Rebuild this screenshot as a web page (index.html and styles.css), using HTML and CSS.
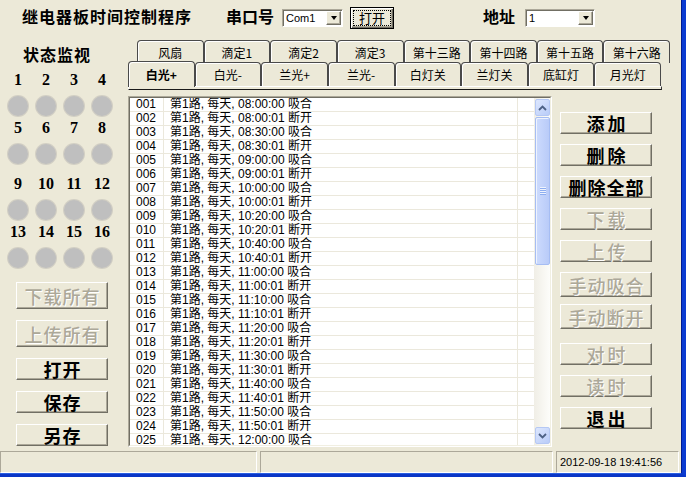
FILE: index.html
```html
<!DOCTYPE html>
<html lang="zh">
<head>
<meta charset="utf-8">
<title>继电器板时间控制程序</title>
<link rel="stylesheet" href="styles.css">
</head>
<body>
<div class="window">
  <div class="frame">
    <header class="topbar">
      <h1 class="title">继电器板时间控制程序</h1>
      <span class="label label-port">串口号</span>
      <div class="combo combo-port"><span class="combo-text">Com1</span><span class="combo-btn"><i class="arrow"></i></span></div>
      <button class="btn-port"><span class="focus">打开</span></button>
      <span class="label label-addr">地址</span>
      <div class="combo combo-addr"><span class="combo-text">1</span><span class="combo-btn"><i class="arrow"></i></span></div>
    </header>

    <main class="main">
      <aside class="left">
        <div class="heading">状态监视</div>
        <div class="led-group g1">
          <span class="num">1</span><span class="num">2</span><span class="num">3</span><span class="num">4</span>
          <span class="dot"></span><span class="dot"></span><span class="dot"></span><span class="dot"></span>
        </div>
        <div class="led-group g2">
          <span class="num">5</span><span class="num">6</span><span class="num">7</span><span class="num">8</span>
          <span class="dot"></span><span class="dot"></span><span class="dot"></span><span class="dot"></span>
        </div>
        <div class="led-group g3">
          <span class="num">9</span><span class="num">10</span><span class="num">11</span><span class="num">12</span>
          <span class="dot"></span><span class="dot"></span><span class="dot"></span><span class="dot"></span>
        </div>
        <div class="led-group g4">
          <span class="num">13</span><span class="num">14</span><span class="num">15</span><span class="num">16</span>
          <span class="dot"></span><span class="dot"></span><span class="dot"></span><span class="dot"></span>
        </div>
        <div class="left-btns">
          <button class="btn btn-tall" disabled>下载所有</button>
          <button class="btn btn-tall" disabled>上传所有</button>
          <button class="btn">打开</button>
          <button class="btn">保存</button>
          <button class="btn">另存</button>
        </div>
      </aside>

      <section class="center">
        <div class="tabs">
          <div class="tabrow tabrow-back">
            <div class="tab">风扇</div>
            <div class="tab">滴定1</div>
            <div class="tab">滴定2</div>
            <div class="tab">滴定3</div>
            <div class="tab">第十三路</div>
            <div class="tab">第十四路</div>
            <div class="tab">第十五路</div>
            <div class="tab">第十六路</div>
          </div>
          <div class="tabrow tabrow-front">
            <div class="tab active">白光+</div>
            <div class="tab">白光-</div>
            <div class="tab">兰光+</div>
            <div class="tab">兰光-</div>
            <div class="tab">白灯关</div>
            <div class="tab">兰灯关</div>
            <div class="tab">底缸灯</div>
            <div class="tab">月光灯</div>
          </div>
          <div class="tabpanel"></div>
        </div>

        <div class="work">
          <div class="listbox">
            <div class="listinner">
              <div class="rows">
                <div class="row"><span class="c1">001</span><span class="c2">第1路, 每天, 08:00:00 吸合</span><span class="c3"></span></div>
                <div class="row"><span class="c1">002</span><span class="c2">第1路, 每天, 08:00:01 断开</span><span class="c3"></span></div>
                <div class="row"><span class="c1">003</span><span class="c2">第1路, 每天, 08:30:00 吸合</span><span class="c3"></span></div>
                <div class="row"><span class="c1">004</span><span class="c2">第1路, 每天, 08:30:01 断开</span><span class="c3"></span></div>
                <div class="row"><span class="c1">005</span><span class="c2">第1路, 每天, 09:00:00 吸合</span><span class="c3"></span></div>
                <div class="row"><span class="c1">006</span><span class="c2">第1路, 每天, 09:00:01 断开</span><span class="c3"></span></div>
                <div class="row"><span class="c1">007</span><span class="c2">第1路, 每天, 10:00:00 吸合</span><span class="c3"></span></div>
                <div class="row"><span class="c1">008</span><span class="c2">第1路, 每天, 10:00:01 断开</span><span class="c3"></span></div>
                <div class="row"><span class="c1">009</span><span class="c2">第1路, 每天, 10:20:00 吸合</span><span class="c3"></span></div>
                <div class="row"><span class="c1">010</span><span class="c2">第1路, 每天, 10:20:01 断开</span><span class="c3"></span></div>
                <div class="row"><span class="c1">011</span><span class="c2">第1路, 每天, 10:40:00 吸合</span><span class="c3"></span></div>
                <div class="row"><span class="c1">012</span><span class="c2">第1路, 每天, 10:40:01 断开</span><span class="c3"></span></div>
                <div class="row"><span class="c1">013</span><span class="c2">第1路, 每天, 11:00:00 吸合</span><span class="c3"></span></div>
                <div class="row"><span class="c1">014</span><span class="c2">第1路, 每天, 11:00:01 断开</span><span class="c3"></span></div>
                <div class="row"><span class="c1">015</span><span class="c2">第1路, 每天, 11:10:00 吸合</span><span class="c3"></span></div>
                <div class="row"><span class="c1">016</span><span class="c2">第1路, 每天, 11:10:01 断开</span><span class="c3"></span></div>
                <div class="row"><span class="c1">017</span><span class="c2">第1路, 每天, 11:20:00 吸合</span><span class="c3"></span></div>
                <div class="row"><span class="c1">018</span><span class="c2">第1路, 每天, 11:20:01 断开</span><span class="c3"></span></div>
                <div class="row"><span class="c1">019</span><span class="c2">第1路, 每天, 11:30:00 吸合</span><span class="c3"></span></div>
                <div class="row"><span class="c1">020</span><span class="c2">第1路, 每天, 11:30:01 断开</span><span class="c3"></span></div>
                <div class="row"><span class="c1">021</span><span class="c2">第1路, 每天, 11:40:00 吸合</span><span class="c3"></span></div>
                <div class="row"><span class="c1">022</span><span class="c2">第1路, 每天, 11:40:01 断开</span><span class="c3"></span></div>
                <div class="row"><span class="c1">023</span><span class="c2">第1路, 每天, 11:50:00 吸合</span><span class="c3"></span></div>
                <div class="row"><span class="c1">024</span><span class="c2">第1路, 每天, 11:50:01 断开</span><span class="c3"></span></div>
                <div class="row"><span class="c1">025</span><span class="c2">第1路, 每天, 12:00:00 吸合</span><span class="c3"></span></div>
              </div>
              <div class="scroll">
                <div class="sb-btn"><svg width="9" height="6" viewBox="0 0 9 6"><path d="M1 5 L4.5 1.5 L8 5" fill="none" stroke="#4d6185" stroke-width="1.8"/></svg></div>
                <div class="sb-thumb"><span class="sb-grip"></span></div>
                <div class="sb-fill"></div>
                <div class="sb-btn"><svg width="9" height="6" viewBox="0 0 9 6"><path d="M1 1 L4.5 4.5 L8 1" fill="none" stroke="#4d6185" stroke-width="1.8"/></svg></div>
              </div>
            </div>
          </div>

          <div class="actions">
            <button class="btn wide">添加</button>
            <button class="btn wide">删除</button>
            <button class="btn">删除全部</button>
            <button class="btn wide" disabled>下载</button>
            <button class="btn wide" disabled>上传</button>
            <button class="btn btn-25" disabled>手动吸合</button>
            <button class="btn btn-25 tight" disabled>手动断开</button>
            <button class="btn wide loose" disabled>对时</button>
            <button class="btn wide" disabled>读时</button>
            <button class="btn wide">退出</button>
          </div>
        </div>
      </section>
    </main>

    <footer class="status">
      <div class="panel p1"></div>
      <div class="panel p2"></div>
      <div class="panel p3">2012-09-18 19:41:56</div>
    </footer>
  </div>
</div>
</body>
</html>
```

FILE: styles.css
```css
html, body {
  margin: 0;
  padding: 0;
}

body {
  width: 686px;
  height: 477px;
  overflow: hidden;
  background: #ece9d8;
  font-family: "Noto Sans CJK SC", "Liberation Sans", sans-serif;
  color: #000;
}

.window {
  box-sizing: border-box;
  width: 686px;
  height: 477px;
  border-right: 5px solid #0b3bd1;
  border-bottom: 4px solid #0a36c6;
}

.frame {
  height: 473px;
  display: flex;
  flex-direction: column;
  background: #ece9d8;
  box-shadow: 1px 0 0 #001a8f, 0 1px 0 #2a5fe2;
}

/* ---------- top bar ---------- */
.topbar {
  height: 36px;
  flex: none;
  display: flex;
  align-items: flex-start;
}

.title {
  margin: 6px 0 0 22px;
  font-size: 16px;
  line-height: 20px;
  font-weight: 700;
  letter-spacing: 1px;
}

.label {
  margin-top: 6px;
  font-size: 16px;
  line-height: 20px;
  font-weight: 700;
}

.label-port { margin-left: 34px; }
.label-addr { margin-left: 89px; }

.combo {
  box-sizing: border-box;
  height: 18px;
  margin-top: 9px;
  display: flex;
  background: #fff;
  border: 1px solid;
  border-color: #aca899 #fff #fff #aca899;
  box-shadow: inset 1px 1px 0 #716f64;
}

.combo-port { margin-left: 8px; width: 61px; }
.combo-addr { margin-left: 10px; width: 70px; }

.combo-text {
  padding-left: 3px;
  font-family: "Liberation Sans", sans-serif;
  font-size: 11px;
  line-height: 16px;
}

.combo-btn {
  box-sizing: border-box;
  width: 15px;
  height: 14px;
  margin: 1px 1px 0 auto;
  background: #ece9d8;
  border: 1px solid;
  border-color: #fff #716f64 #716f64 #fff;
  box-shadow: inset -1px -1px 0 #aca899;
  display: flex;
  align-items: center;
  justify-content: center;
}

.arrow {
  width: 0;
  height: 0;
  border-left: 3.5px solid transparent;
  border-right: 3.5px solid transparent;
  border-top: 4px solid #000;
}

.btn-port {
  box-sizing: border-box;
  margin: 7px 0 0 7px;
  width: 44px;
  height: 22px;
  padding: 2px;
  background: #ece9d8;
  border: 1px solid #000;
  box-shadow: inset 1px 1px 0 #fff, inset -1px -1px 0 #716f64, inset -2px -2px 0 #aca899;
  font-family: "Noto Sans CJK SC", sans-serif;
  font-size: 13px;
  color: #000;
  display: flex;
}

.focus {
  flex: 1;
  border: 1px dotted #000;
  line-height: 14px;
  text-align: center;
}

/* ---------- main ---------- */
.main {
  height: 413px;
  flex: none;
  display: grid;
  grid-template-columns: 128px 1fr;
}

.left {
  display: flex;
  flex-direction: column;
}

.heading {
  margin: 8px 0 0 23px;
  font-size: 16px;
  line-height: 20px;
  font-weight: 700;
  letter-spacing: 1px;
}

.led-group {
  display: grid;
  grid-template-columns: repeat(4, 28px);
  padding-left: 4px;
}

.g1 { margin-top: 8px; }
.g2 { margin-top: 4px; }
.g3 { margin-top: 12px; }
.g4 { margin-top: 4px; }

.num {
  font-family: "Liberation Serif", serif;
  font-weight: 700;
  font-size: 16px;
  line-height: 16px;
  text-align: center;
}

.dot {
  justify-self: center;
  width: 20px;
  height: 20px;
  margin-top: 8px;
  border-radius: 50%;
  background: #bfbfbf;
  box-shadow: 0 0 0 1px #d2cfc4;
}

.left-btns {
  margin: 14px 0 0 16px;
  width: 92px;
  display: flex;
  flex-direction: column;
  gap: 11px;
}

/* ---------- buttons ---------- */
.btn {
  box-sizing: border-box;
  width: 92px;
  height: 22px;
  padding: 0 0 0 1px;
  background: #ece9d8;
  border: 1px solid;
  border-color: #fff #716f64 #716f64 #fff;
  box-shadow: inset -1px -1px 0 #aca899;
  font-family: "Noto Sans CJK SC", sans-serif;
  font-weight: 700;
  font-size: 18px;
  line-height: 18px;
  letter-spacing: 1px;
  color: #000;
  display: flex;
  align-items: center;
  justify-content: center;
}

.btn.wide {
  letter-spacing: 3px;
  padding-left: 3px;
}

.btn:disabled {
  color: #aca899;
  font-weight: 500;
  text-shadow: 1px 1px 0 #fff;
}

.btn-tall { height: 27px; }
.btn-25 { height: 25px; }

/* ---------- tabs ---------- */
.center {
  display: flex;
  flex-direction: column;
}

.tabs {
  margin-top: 4px;
  width: 542px;
}

.tabrow {
  display: flex;
  align-items: flex-start;
}

.tabrow-back {
  margin-left: 9px;
  height: 23px;
}

.tabrow-front {
  margin-top: -1px;
  height: 24px;
}

.tab {
  box-sizing: border-box;
  flex: none;
  width: 66.625px;
  height: 100%;
  border: 1px solid #4a4a4a;
  border-bottom: 0;
  border-radius: 4px 4px 0 0;
  background: #ece9d8;
  box-shadow: inset 1px 1px 0 #fff;
  font-size: 12px;
  display: flex;
  align-items: center;
  justify-content: center;
}

.tabrow-front .tab { height: 24px; }

.tabrow-front .tab.active {
  height: 26px;
  margin-top: -1px;
  font-weight: 700;
  position: relative;
  z-index: 1;
}

.tabpanel {
  box-sizing: border-box;
  width: 534px;
  height: 4px;
  border: 1px solid;
  border-color: #fff #3a3a3a #1a1a1a #fff;
}

/* ---------- list ---------- */
.work {
  display: flex;
  align-items: flex-start;
  margin-top: 6px;
}

.listbox {
  box-sizing: border-box;
  width: 424px;
  height: 351px;
  border: 1px solid;
  border-color: #aca899 #fff #fff #aca899;
}

.listinner {
  box-sizing: border-box;
  height: 100%;
  border: 1px solid;
  border-color: #716f64 #f1efe2 #f1efe2 #716f64;
  background: #fff;
  display: flex;
}

.rows {
  flex: 1;
  overflow: hidden;
}

.row {
  box-sizing: border-box;
  height: 14px;
  display: flex;
  border-bottom: 1px solid #ebe8dc;
  font-family: "Liberation Sans", "Noto Sans CJK SC", sans-serif;
  font-size: 12px;
  line-height: 13px;
  white-space: nowrap;
}

.c1 {
  box-sizing: border-box;
  width: 34px;
  padding-left: 6px;
  border-right: 1px solid #ebe8dc;
}

.c2 {
  box-sizing: border-box;
  width: 354px;
  padding-left: 6px;
  border-right: 1px solid #ebe8dc;
}

.c3 { flex: 1; }

.scroll {
  box-sizing: border-box;
  width: 16px;
  padding: 1px 0 1px 1px;
  display: flex;
  flex-direction: column;
  background: linear-gradient(to right, #f0eee6, #fdfdfa);
}

.sb-btn {
  box-sizing: border-box;
  height: 17px;
  border: 1px solid #b5c8f4;
  border-radius: 2px;
  background: linear-gradient(135deg, #dde7fe, #b9ccf8);
  display: flex;
  align-items: center;
  justify-content: center;
}

.sb-thumb {
  box-sizing: border-box;
  height: 148px;
  margin-top: 1px;
  border: 1px solid #a6bdf3;
  border-radius: 2px;
  background: linear-gradient(to right, #cddbfd, #b9cbf8);
  box-shadow: inset 1px 1px 0 #eef3fe;
  display: flex;
  align-items: center;
  justify-content: center;
}

.sb-grip {
  width: 6px;
  height: 8px;
  background: repeating-linear-gradient(to bottom, #eef3fe 0 1px, #8eaef0 1px 2px);
}

.sb-fill { flex: 1; }

/* ---------- actions ---------- */
.actions {
  margin: 16px 0 0 8px;
  width: 92px;
  display: flex;
  flex-direction: column;
  gap: 10px;
}

.tight { margin-top: -3px; }
.loose { margin-top: 4px; }

/* ---------- status bar ---------- */
.status {
  box-sizing: border-box;
  height: 24px;
  flex: none;
  padding-top: 2px;
  display: flex;
  gap: 3px;
}

.panel {
  box-sizing: border-box;
  height: 22px;
  border: 1px solid;
  border-color: #aca899 #fff #fff #aca899;
}

.p1 { width: 257px; }
.p2 { width: 293px; }

.p3 {
  width: 123px;
  padding-left: 3px;
  font-family: "Liberation Sans", sans-serif;
  font-size: 11px;
  line-height: 20px;
}
```
